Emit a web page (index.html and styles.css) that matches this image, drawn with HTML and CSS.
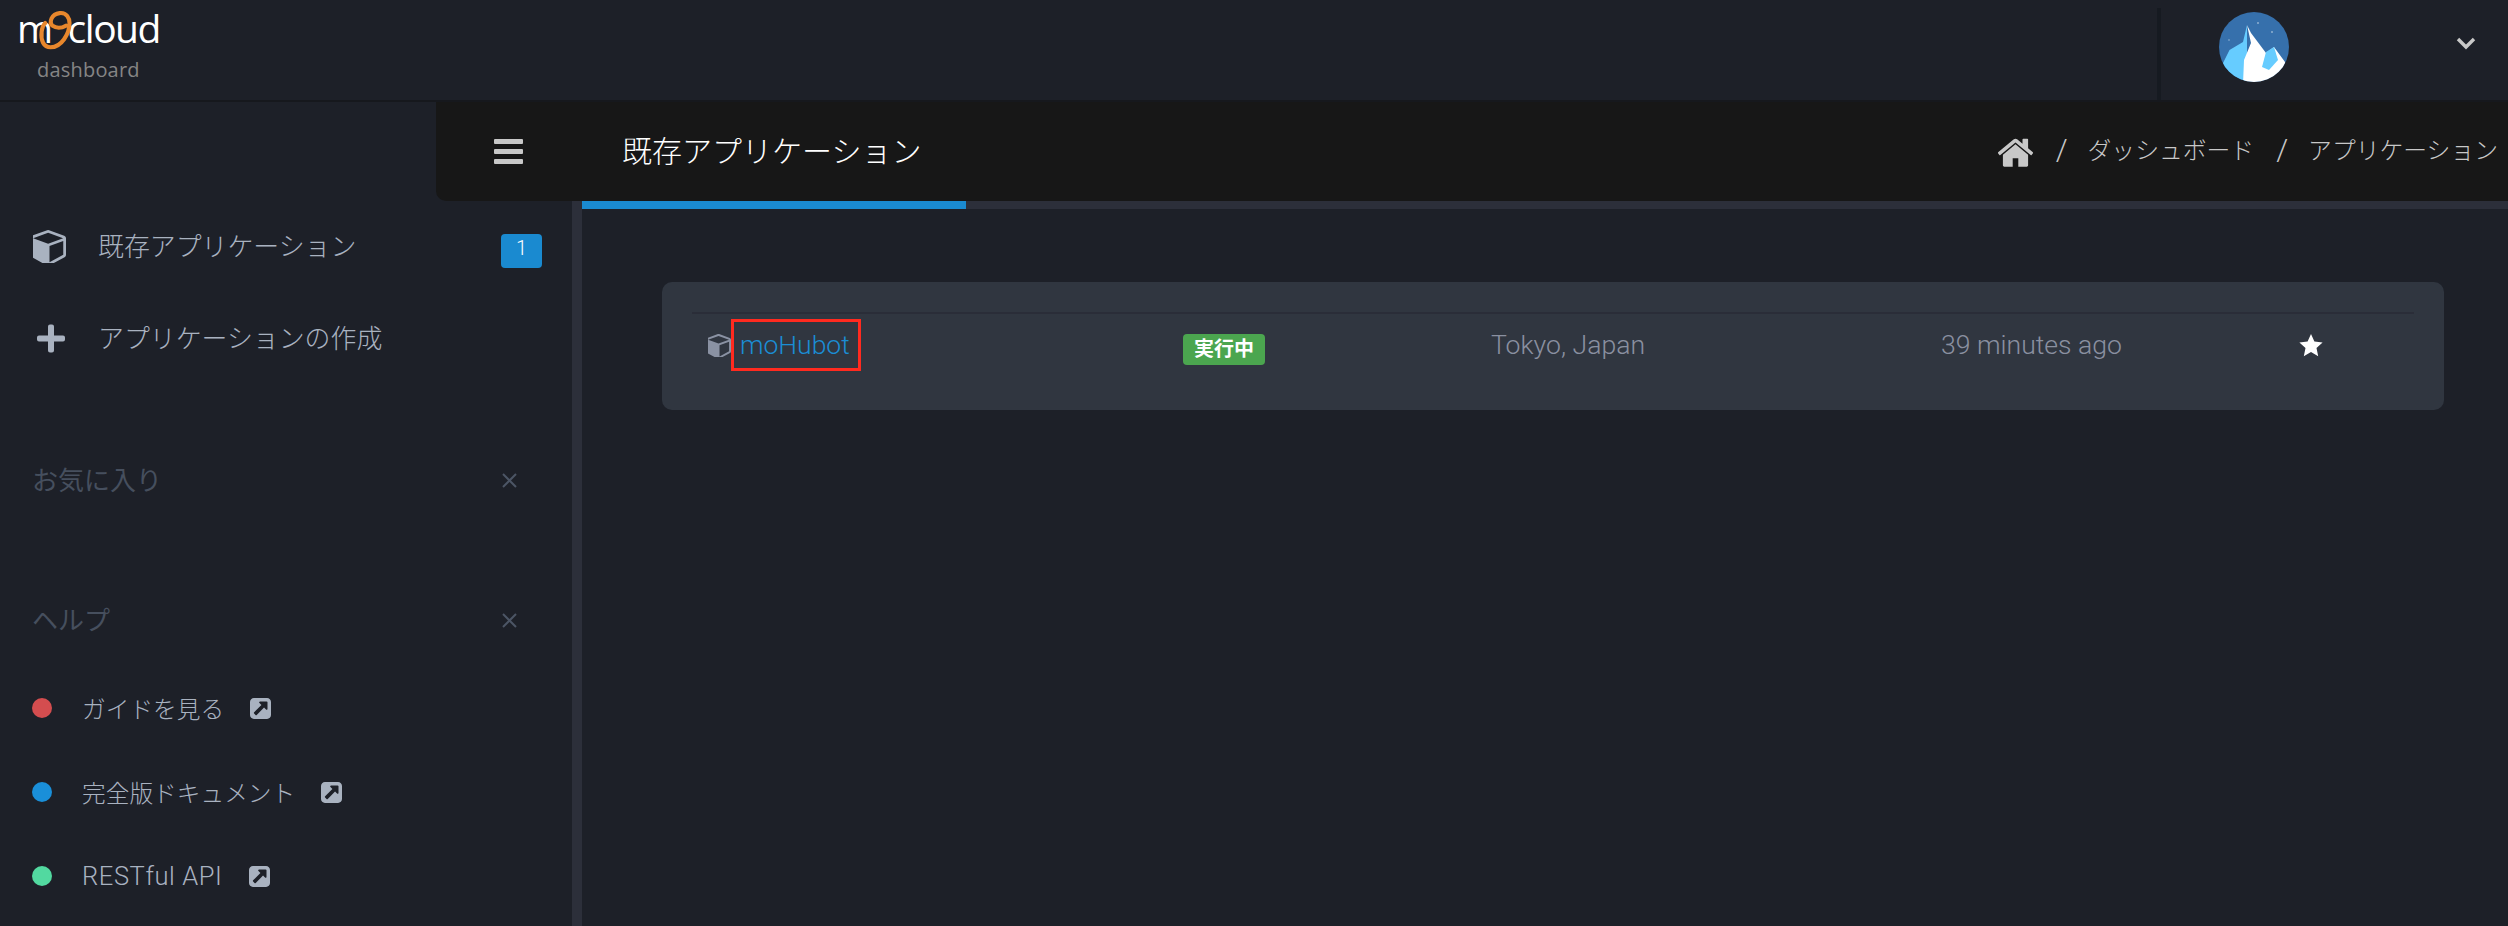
FILE: index.html
```html
<!DOCTYPE html>
<html lang="ja">

<head>
    <meta charset="UTF-8">
    <meta name="viewport" content="width=device-width, initial-scale=1.0">
    <title>moCloud dashboard</title>
    <link rel="stylesheet" href="styles.css">
</head>

<body>
    <header class="header">
        <div class="logo">
            <div class="logo-name">m<span class="logo-gap"></span>cloud</div>
            <svg class="logo-loop" viewBox="0 0 40 48" width="36" height="44">
                <path d="M31 17 C26 20 20 20 16 17 C12 13 15 4 24 3 C32 2 35 9 35 14 C35 26 26 41 14 41 C6 41 3 33 4 24 C4.5 20 6 16 8 14" fill="none" stroke="#e8872c" stroke-width="4.6" stroke-linecap="round"/>
            </svg>
            <div class="logo-sub">dashboard</div>
        </div>
        <div class="user">
            <svg class="avatar" viewBox="0 0 70 70" width="70" height="70">
                <defs><clipPath id="avatar-clip"><circle cx="35" cy="35" r="35"/></clipPath></defs>
                <g clip-path="url(#avatar-clip)">
                    <rect width="70" height="70" fill="#3670ac"/>
                    <path d="M28 13 L24 30 L10.5 38 L4 51 L0 72 L28 72 Z" fill="#66ccff"/>
                    <path d="M28 13 L32 21 L47 41 L55 35 L66 50 L72 72 L24 72 L25 48 L32 31 Z" fill="#ffffff"/>
                    <path d="M47 40 L55 35 L59 48 L50 58 L43 55 Z" fill="#66ccff"/>
                    <circle cx="39" cy="11" r="1" fill="#8fb0d0"/>
                    <circle cx="53" cy="20" r="1" fill="#8fb0d0"/>
                    <circle cx="10" cy="28" r="1" fill="#6f9ac4"/>
                </g>
            </svg>
            <svg class="chevron" viewBox="0 0 20 13" width="20" height="13">
                <polyline points="2,2 10,10 18,2" fill="none" stroke="#c8c8c8" stroke-width="3.4"/>
            </svg>
        </div>
    </header>

    <div class="shell">
        <aside class="sidebar">
            <nav class="nav">
                <a class="nav-item">
                    <svg class="nav-icon" viewBox="128 128 1536 1536"><path fill="#a9b2c0" d="M896 1629l640-349v-636l-640 233v752zm-64-865l698-254-698-254-698 254zm832-252v768q0 35-18 65t-49 47l-704 384q-28 16-61 16t-61-16l-704-384q-31-17-49-47t-18-65v-768q0-40 23-73t61-47l704-256q22-8 44-8t44 8l704 256q38 14 61 47t23 73z"/></svg>
                    <span class="nav-text">既存アプリケーション</span>
                    <span class="count">1</span>
                </a>
                <a class="nav-item">
                    <svg class="nav-icon" viewBox="-4 -2.5 33 33"><path fill="#a9b2c0" d="M11 2 a2 2 0 0 1 2-2 h2 a2 2 0 0 1 2 2 v9 h9 a2 2 0 0 1 2 2 v2 a2 2 0 0 1-2 2 h-9 v9 a2 2 0 0 1-2 2 h-2 a2 2 0 0 1-2-2 v-9 h-9 a2 2 0 0 1-2-2 v-2 a2 2 0 0 1 2-2 h9 z"/></svg>
                    <span class="nav-text">アプリケーションの作成</span>
                </a>
            </nav>

            <div class="section-title">
                <span>お気に入り</span>
                <svg class="close" viewBox="0 0 15 15" width="15" height="15"><path d="M1 1 L14 14 M14 1 L1 14" stroke="#4c5565" stroke-width="2"/></svg>
            </div>

            <div class="section-title section-help">
                <span>ヘルプ</span>
                <svg class="close" viewBox="0 0 15 15" width="15" height="15"><path d="M1 1 L14 14 M14 1 L1 14" stroke="#4c5565" stroke-width="2"/></svg>
            </div>

            <ul class="help-list">
                <li class="help-item">
                    <span class="dot dot-red"></span>
                    <span>ガイドを見る</span>
                    <svg class="ext" viewBox="128 128 1536 1536"><path fill="#a9b2c0" d="M1408 928v-480q0-26-19-45t-45-19h-480q-42 0-59 39-17 41 14 70l144 144-534 534q-19 19-19 45t19 45l102 102q19 19 45 19t45-19l534-534 144 144q18 19 45 19 12 0 25-5 39-17 39-59zm256-512v960q0 119-84.5 203.5t-203.5 84.5h-960q-119 0-203.5-84.5t-84.5-203.5v-960q0-119 84.5-203.5t203.5-84.5h960q119 0 203.5 84.5t84.5 203.5z"/></svg>
                </li>
                <li class="help-item">
                    <span class="dot dot-blue"></span>
                    <span>完全版ドキュメント</span>
                    <svg class="ext" viewBox="128 128 1536 1536"><path fill="#a9b2c0" d="M1408 928v-480q0-26-19-45t-45-19h-480q-42 0-59 39-17 41 14 70l144 144-534 534q-19 19-19 45t19 45l102 102q19 19 45 19t45-19l534-534 144 144q18 19 45 19 12 0 25-5 39-17 39-59zm256-512v960q0 119-84.5 203.5t-203.5 84.5h-960q-119 0-203.5-84.5t-84.5-203.5v-960q0-119 84.5-203.5t203.5-84.5h960q119 0 203.5 84.5t84.5 203.5z"/></svg>
                </li>
                <li class="help-item">
                    <span class="dot dot-green"></span>
                    <span class="help-latin">RESTful API</span>
                    <svg class="ext" viewBox="128 128 1536 1536"><path fill="#a9b2c0" d="M1408 928v-480q0-26-19-45t-45-19h-480q-42 0-59 39-17 41 14 70l144 144-534 534q-19 19-19 45t19 45l102 102q19 19 45 19t45-19l534-534 144 144q18 19 45 19 12 0 25-5 39-17 39-59zm256-512v960q0 119-84.5 203.5t-203.5 84.5h-960q-119 0-203.5-84.5t-84.5-203.5v-960q0-119 84.5-203.5t203.5-84.5h960q119 0 203.5 84.5t84.5 203.5z"/></svg>
                </li>
            </ul>
        </aside>

        <main class="main">
            <div class="topbar">
                <div class="menu-btn">
                    <span class="bar"></span>
                    <span class="bar"></span>
                    <span class="bar"></span>
                </div>
                <h1 class="page-title">既存アプリケーション</h1>
                <div class="breadcrumb">
                    <svg class="home" viewBox="96 192 1600 1344"><path fill="#c8c8c8" d="M1472 992v480q0 26-19 45t-45 19h-384v-384h-256v384h-384q-26 0-45-19t-19-45v-480q0-1 .5-3t.5-3l575-474 575 474q1 2 1 6zm223-69l-62 74q-8 9-21 11h-3q-13 0-21-7l-692-577-692 577q-12 8-24 7-13-2-21-11l-62-74q-8-10-7-23.5t11-21.5l719-599q32-26 76-26t76 26l244 204v-195q0-14 9-23t23-9h192q14 0 23 9t9 23v408l219 182q10 8 11 21.5t-7 23.5z"/></svg>
                    <span class="sep">/</span>
                    <span class="crumb">ダッシュボード</span>
                    <span class="sep sep-mid">/</span>
                    <span class="crumb">アプリケーション</span>
                </div>
            </div>
            <div class="progress"><div class="progress-fill"></div></div>

            <div class="content">
                <div class="card">
                    <div class="app-row">
                        <div class="app-name">
                            <svg class="app-icon" viewBox="128 128 1536 1536"><path fill="#8a92a3" d="M896 1629l640-349v-636l-640 233v752zm-64-865l698-254-698-254-698 254zm832-252v768q0 35-18 65t-49 47l-704 384q-28 16-61 16t-61-16l-704-384q-31-17-49-47t-18-65v-768q0-40 23-73t61-47l704-256q22-8 44-8t44 8l704 256q38 14 61 47t23 73z"/></svg>
                            <a class="app-link">moHubot</a>
                        </div>
                        <div class="app-status"><span class="status">実行中</span></div>
                        <div class="app-meta">Tokyo, Japan</div>
                        <div class="app-meta">39 minutes ago</div>
                        <svg class="star" viewBox="0 0 24 23" width="24" height="23"><polygon fill="#ffffff" points="12,0 15.4,7.6 23.6,8.5 17.5,14 19.2,22.2 12,18 4.8,22.2 6.5,14 0.4,8.5 8.6,7.6"/></svg>
                    </div>
                </div>
            </div>
        </main>
    </div>
</body>

</html>
```

FILE: styles.css
```css
* {
    box-sizing: border-box;
}

html, body {
    height: 100%;
}

body {
    margin: 0;
    overflow: hidden;
    background-color: #1d2028;
    color: #a9b2c0;
    font-family: Roboto, "Noto Sans CJK JP", sans-serif;
    font-weight: 300;
}

a {
    text-decoration: none;
}

/* header */
.header {
    display: flex;
    justify-content: space-between;
    height: 102px;
    border-bottom: 2px solid #16181d;
}

.logo {
    position: relative;
    width: 200px;
    padding: 6px 0 0 17px;
}

.logo-name {
    display: flex;
    color: #ffffff;
    font-family: "Open Sans", sans-serif;
    font-size: 39px;
    font-weight: 400;
    line-height: 44px;
    letter-spacing: -1.5px;
}

.logo-gap {
    width: 16px;
}

.logo-loop {
    position: absolute;
    left: 38px;
    top: 10px;
}

.logo-sub {
    padding-left: 20px;
    margin-top: 8px;
    color: #858585;
    font-family: "Open Sans", sans-serif;
    font-size: 20px;
    font-weight: 400;
    line-height: 24px;
    letter-spacing: 0.2px;
}

.user {
    display: flex;
    align-items: flex-start;
    width: 351px;
    margin-top: 8px;
    padding-left: 58px;
    border-left: 4px solid #161a21;
}

.avatar {
    margin-top: 4px;
}

.chevron {
    margin: 29px 0 0 167px;
}

/* layout */
.shell {
    display: flex;
    height: 824px;
}

.sidebar {
    flex: none;
    width: 582px;
    padding-top: 98px;
    border-right: 10px solid #2c2f3a;
}

.main {
    flex: 1;
    min-width: 0;
}

/* sidebar */
.nav-item {
    display: flex;
    align-items: center;
    height: 92px;
    padding-left: 33px;
    color: #a9b2c0;
}

.nav-icon {
    flex: none;
    width: 33px;
    height: 33px;
}

.nav-text {
    margin-left: 32px;
    padding-top: 4px;
    font-size: 25.9px;
    line-height: 1;
}

.count {
    width: 41px;
    height: 34px;
    margin-left: auto;
    margin-right: 30px;
    margin-top: 10px;
    border-radius: 4px;
    background-color: #1a8ad0;
    color: #ffffff;
    font-size: 20px;
    line-height: 29px;
    text-align: center;
}

.section-title {
    display: flex;
    align-items: center;
    height: 40px;
    margin-top: 74px;
    padding-left: 32px;
    color: #464f5e;
    font-size: 26px;
    font-weight: 400;
}

.section-help {
    margin-top: 100px;
}

.close {
    margin-left: auto;
    margin-right: 55px;
    margin-top: 4px;
}

.help-list {
    margin: 28px 0 0;
    padding: 0;
    list-style: none;
}

.help-item {
    display: flex;
    align-items: center;
    height: 84px;
    padding-left: 32px;
    font-size: 23.7px;
}

.help-latin {
    font-size: 25.5px;
    letter-spacing: 0.6px;
}

.dot {
    width: 20px;
    height: 20px;
    margin-right: 30px;
    border-radius: 50%;
}

.dot-red {
    background-color: #d44d4f;
}

.dot-blue {
    background-color: #1a8fd9;
}

.dot-green {
    background-color: #52d9a0;
}

.ext {
    width: 21px;
    height: 21px;
    margin-left: 26px;
}

/* top bar */
.topbar {
    display: flex;
    align-items: center;
    height: 99px;
    margin-left: -146px;
    position: relative;
    border-bottom-left-radius: 10px;
    background-color: #171717;
}

.menu-btn {
    display: flex;
    flex-direction: column;
    gap: 5px;
    width: 29px;
    margin-left: 58px;
}

.bar {
    height: 5px;
    border-radius: 1px;
    background-color: #c8c8c8;
}

.page-title {
    margin: 0 0 6px 99px;
    color: #ffffff;
    font-size: 30px;
    font-weight: 300;
}

.breadcrumb {
    display: flex;
    align-items: center;
    margin-left: auto;
    padding-right: 10px;
    color: #c8c8c8;
    font-size: 23.8px;
}

.crumb {
    margin-bottom: 6px;
}

.home {
    width: 35px;
    height: 30px;
    margin-right: 23px;
}

.sep {
    margin-right: 20px;
    margin-bottom: 4px;
    font-size: 30px;
}

.sep-mid {
    margin-left: 22px;
}

.progress {
    height: 8px;
    background-color: #2c2f3a;
}

.progress-fill {
    width: 384px;
    height: 100%;
    background-color: #1a8ad0;
}

/* app list */
.content {
    padding: 73px 64px 0 80px;
}

.card {
    height: 128px;
    padding: 30px 30px 0;
    border-radius: 10px;
    background-color: #303640;
}

.app-row {
    display: grid;
    grid-template-columns: 475px 308px 450px 358px 24px;
    align-items: start;
    padding: 5px 0 0 16px;
    border-top: 2px solid #2a2d38;
}

.app-name {
    display: flex;
    align-items: center;
}

.app-icon {
    width: 23px;
    height: 23px;
}

.app-link {
    width: 130px;
    height: 52px;
    padding-left: 6px;
    border: 3px solid #ff2a1f;
    color: #1b8dd4;
    font-size: 26.5px;
    font-weight: 300;
    line-height: 46px;
}

.app-status {
    padding-top: 15px;
}

.status {
    display: block;
    width: 82px;
    height: 31px;
    border-radius: 4px;
    background-color: #4ba64f;
    color: #ffffff;
    font-size: 20px;
    font-weight: 700;
    line-height: 30px;
    text-align: center;
}

.app-meta {
    padding-top: 7px;
    color: #8a90a0;
    font-size: 26.6px;
    font-weight: 300;
    line-height: 38px;
}

.star {
    margin-top: 15px;
}
```
